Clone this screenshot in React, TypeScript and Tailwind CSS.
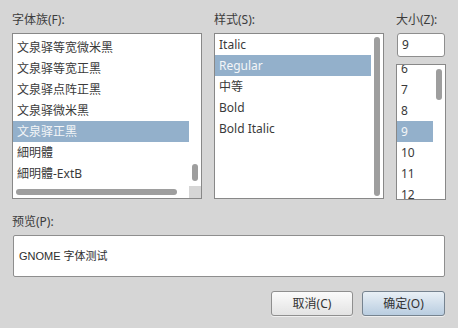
import React from 'react';

const families = ['文泉驿等宽微米黑', '文泉驿等宽正黑', '文泉驿点阵正黑', '文泉驿微米黑', '文泉驿正黑', '細明體', '細明體-ExtB'];
const styles = ['Italic', 'Regular', '中等', 'Bold', 'Bold Italic'];
const sizes = ['6', '7', '8', '9', '10', '11', '12'];

function Row({ text, selected }: { text: string; selected?: boolean }) {
  return (
    <div
      className={`h-[21px] leading-[21px] pl-[4px] whitespace-nowrap ${
        selected ? 'bg-[#93b0cb] text-[#f4f6f8]' : 'text-[#3a3a3a]'
      }`}
    >
      {text}
    </div>
  );
}

function Label({ children }: { children: React.ReactNode }) {
  return <div className="h-[18px] leading-[18px] mb-[4px] text-[#3c3c3c]">{children}</div>;
}

export default function App() {
  return (
    <div
      className="w-[458px] h-[328px] bg-[#d6d6d6] px-[12px] pt-[11px] text-[12px] overflow-hidden"
      style={{ fontFamily: '"Noto Sans", "Noto Sans CJK SC", sans-serif' }}
    >
      <div className="flex gap-[12px]">
        {/* font family */}
        <div className="w-[190px]">
          <Label>字体族(F):</Label>
          <div className="h-[166px] border border-[#888888] bg-white grid grid-cols-[176px_12px] grid-rows-[152px_12px]">
            <div className="overflow-hidden pt-[3px]">
              {families.map((f) => (
                <Row key={f} text={f} selected={f === '文泉驿正黑'} />
              ))}
            </div>
            <div>
              <div className="mt-[130px] ml-[3px] w-[6px] h-[17px] rounded-full bg-[#9e9e9e]" />
            </div>
            <div className="flex items-center">
              <div className="ml-[3px] w-[161px] h-[6px] rounded-full bg-[#9e9e9e]" />
            </div>
            <div className="bg-[#d6d6d6]" />
          </div>
        </div>

        {/* style */}
        <div className="w-[170px]">
          <Label>样式(S):</Label>
          <div className="h-[166px] border border-[#888888] bg-white flex">
            <div className="w-[156px]">
              {styles.map((s) => (
                <Row key={s} text={s} selected={s === 'Regular'} />
              ))}
            </div>
            <div className="w-[12px]">
              <div className="mt-[3px] ml-[3px] w-[6px] h-[159px] rounded-full bg-[#9e9e9e]" />
            </div>
          </div>
        </div>

        {/* size */}
        <div className="w-[50px]">
          <Label>大小(Z):</Label>
          <div className="ml-[1px] w-[48px] h-[24px] border border-[#8e8e8e] rounded-[3px] bg-white pl-[4px] leading-[22px] text-[#333333]">
            9
          </div>
          <div className="mt-[7px] h-[136px] border border-[#888888] bg-white flex">
            <div className="w-[36px] overflow-hidden">
              <div className="-mt-[7px]">
                {sizes.map((s) => (
                  <Row key={s} text={s} selected={s === '9'} />
                ))}
              </div>
            </div>
            <div className="w-[12px]">
              <div className="mt-[4px] ml-[3px] w-[6px] h-[31px] rounded-full bg-[#9e9e9e]" />
            </div>
          </div>
        </div>
      </div>

      {/* preview */}
      <div className="mt-[13px]">
        <Label>预览(P):</Label>
        <div
          className="ml-[1px] w-[432px] h-[42px] border border-[#8e8e8e] rounded-[2px] bg-white flex items-center pl-[5px] text-[11px] text-[#2e2e2e]"
          style={{ fontFamily: '"Liberation Sans", "Noto Sans CJK SC", sans-serif' }}
        >
          GNOME 字体测试
        </div>
      </div>

      {/* buttons */}
      <div className="mt-[14px] flex justify-end gap-[9px] pr-[1px]">
        <button className="w-[82px] h-[25px] border border-[#8f8f8f] rounded-[3px] bg-gradient-to-b from-[#fbfbfb] to-[#e3e3e3] text-[#333333] shadow-[0_1px_0_rgba(255,255,255,0.6)]">
          取消(C)
        </button>
        <button className="w-[83px] h-[25px] border border-[#76838f] rounded-[3px] bg-gradient-to-b from-[#e9f0f6] to-[#b9cde0] text-[#333333] shadow-[0_1px_0_rgba(255,255,255,0.6)]">
          确定(O)
        </button>
      </div>
    </div>
  );
}
